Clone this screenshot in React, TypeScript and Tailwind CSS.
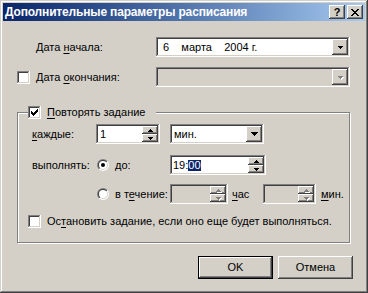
import React from "react";

const RAISED = "shadow-[inset_-1px_-1px_#404040,inset_1px_1px_#fff,inset_-2px_-2px_#808080]";
const SUNKEN = "shadow-[inset_-1px_-1px_#fff,inset_1px_1px_#808080,inset_-2px_-2px_#d4d0c8,inset_2px_2px_#404040]";

function Check() {
  const cols = [2, 3, 4, 3, 2, 1, 0];
  return (
    <svg width="7" height="7" viewBox="0 0 7 7" shapeRendering="crispEdges">
      {cols.map((y, x) => (
        <rect key={x} x={x} y={y} width="1" height="3" fill="#000" />
      ))}
    </svg>
  );
}

function Checkbox({ checked }: { checked?: boolean }) {
  return (
    <div className={`w-[13px] h-[13px] bg-white shrink-0 flex items-center justify-center ${SUNKEN}`}>
      {checked && <Check />}
    </div>
  );
}

function Radio({ checked, id }: { checked?: boolean; id: string }) {
  return (
    <svg width="12" height="12" viewBox="0 0 12 12" className="shrink-0">
      <defs>
        <linearGradient id={`o${id}`} x1="0" y1="0" x2="1" y2="1">
          <stop offset="0.5" stopColor="#808080" />
          <stop offset="0.5" stopColor="#ffffff" />
        </linearGradient>
        <linearGradient id={`i${id}`} x1="0" y1="0" x2="1" y2="1">
          <stop offset="0.5" stopColor="#404040" />
          <stop offset="0.5" stopColor="#d4d0c8" />
        </linearGradient>
      </defs>
      <circle cx="6" cy="6" r="6" fill={`url(#o${id})`} />
      <circle cx="6" cy="6" r="5" fill={`url(#i${id})`} />
      <circle cx="6" cy="6" r="4" fill="#fff" />
      {checked && <circle cx="6" cy="6" r="2" fill="#000" />}
    </svg>
  );
}

function Tri({ w, h, up, color }: { w: number; h: number; up?: boolean; color: string }) {
  const pts = up ? `0,${h} ${w},${h} ${w / 2},0` : `0,0 ${w},0 ${w / 2},${h}`;
  return (
    <svg width={w} height={h} viewBox={`0 0 ${w} ${h}`} shapeRendering="crispEdges">
      <polygon points={pts} fill={color} />
    </svg>
  );
}

function Arrow({ up, disabled, w = 5, h = 3 }: { up?: boolean; disabled?: boolean; w?: number; h?: number }) {
  if (disabled) {
    return (
      <div className="relative">
        <div className="absolute left-[1px] top-[1px]">
          <Tri w={w} h={h} up={up} color="#fff" />
        </div>
        <div className="relative">
          <Tri w={w} h={h} up={up} color="#808080" />
        </div>
      </div>
    );
  }
  return <Tri w={w} h={h} up={up} color="#000" />;
}

function Spin({ disabled }: { disabled?: boolean }) {
  return (
    <div className="flex flex-col w-[16px] my-[2px] mr-[2px] shrink-0">
      <div className={`flex-1 bg-[#d4d0c8] flex items-center justify-center ${RAISED}`}>
        <Arrow up disabled={disabled} />
      </div>
      <div className={`flex-1 bg-[#d4d0c8] flex items-center justify-center ${RAISED}`}>
        <Arrow disabled={disabled} />
      </div>
    </div>
  );
}

function DropBtn({ disabled, small }: { disabled?: boolean; small?: boolean }) {
  return (
    <div className={`w-[16px] my-[2px] mr-[2px] shrink-0 bg-[#d4d0c8] flex items-center justify-center ${RAISED}`}>
      <Arrow disabled={disabled} w={small ? 5 : 7} h={small ? 3 : 4} />
    </div>
  );
}

function U({ children }: { children: React.ReactNode }) {
  return <span className="underline underline-offset-[2px] decoration-1">{children}</span>;
}

export default function App() {
  return (
    <div className="w-[368px] h-[293px] bg-[#d4d0c8] p-[3px] flex flex-col font-['Liberation_Sans',Arial,sans-serif] text-[11px] text-black leading-none shadow-[inset_-1px_-1px_#404040,inset_1px_1px_#d4d0c8,inset_-2px_-2px_#808080,inset_2px_2px_#fff]">
      {/* title bar */}
      <div className="h-[18px] flex items-center pl-[2px] pr-[2px] bg-linear-to-r from-[#0a246a] to-[#a6caf0]">
        <span className="flex-1 text-white font-bold text-[12px] tracking-[-0.17px] whitespace-nowrap">Дополнительные параметры расписания</span>
        <div className={`w-[16px] h-[14px] bg-[#d4d0c8] flex items-center justify-center font-bold text-[11px] ${RAISED}`}>?</div>
        <div className={`w-[16px] h-[14px] ml-[2px] bg-[#d4d0c8] flex items-center justify-center ${RAISED}`}>
          <svg width="8" height="7" viewBox="0 0 8 7" shapeRendering="crispEdges">
            {[0, 1, 2, 3, 4, 5, 6].map((r) => {
              const a = r <= 3 ? r : 6 - r;
              return (
                <g key={r}>
                  <rect x={a} y={r} width="2" height="1" fill="#000" />
                  <rect x={6 - a} y={r} width="2" height="1" fill="#000" />
                </g>
              );
            })}
          </svg>
        </div>
      </div>

      {/* row 1 */}
      <div className="mt-[16px] h-[20px] flex items-center pl-[33px]">
        <span className="w-[120px]">Дата <U>н</U>ачала:</span>
        <div className={`w-[194px] h-[20px] bg-white flex ${SUNKEN}`}>
          <span className="flex-1 self-center pl-[7px] whitespace-pre">6    марта    2004 г.</span>
          <DropBtn small />
        </div>
      </div>

      {/* row 2 */}
      <div className="mt-[10px] h-[20px] flex items-center pl-[14px]">
        <Checkbox />
        <span className="ml-[6px] w-[120px]">Дата <U>о</U>кончания:</span>
        <div className={`w-[194px] h-[20px] bg-[#d4d0c8] flex ${SUNKEN}`}>
          <span className="flex-1" />
          <DropBtn small disabled />
        </div>
      </div>

      {/* group */}
      <div className="mt-[25px] ml-[14px] w-[333px] h-[131px] relative border border-[#808080] shadow-[inset_1px_1px_#fff,1px_1px_#fff] flex flex-col">
        <div className="absolute left-[10px] top-[-7px] w-[128px] h-[13px] bg-[#d4d0c8] flex items-center">
          <Checkbox checked />
          <span className="ml-[6px]"><U>П</U>овторять задание</span>
        </div>

        <div className="mt-[11px] h-[20px] flex items-center pl-[14px]">
          <span className="w-[64px]"><U>к</U>аждые:</span>
          <div className={`w-[64px] h-[20px] bg-white flex ${SUNKEN}`}>
            <span className="flex-1 self-center pl-[4px]">1</span>
            <Spin />
          </div>
          <div className={`ml-[10px] w-[94px] h-[20px] bg-white flex ${SUNKEN}`}>
            <span className="flex-1 self-center pl-[4px]">мин.</span>
            <DropBtn />
          </div>
        </div>

        <div className="mt-[11px] h-[20px] flex items-center pl-[14px]">
          <span className="w-[65px]">выполнять:</span>
          <Radio checked id="a" />
          <span className="ml-[6px] w-[55px]"><U>д</U>о:</span>
          <div className={`w-[96px] h-[20px] bg-white flex ${SUNKEN}`}>
            <span className="flex-1 self-center pl-[3px] flex items-center">
              19:<span className="bg-[#0a246a] text-white">00</span>
            </span>
            <Spin />
          </div>
        </div>

        <div className="mt-[9px] h-[20px] flex items-center pl-[14px]">
          <span className="w-[65px]" />
          <Radio id="b" />
          <span className="ml-[6px] w-[55px]">в т<U>е</U>чение:</span>
          <div className={`w-[58px] h-[20px] bg-[#d4d0c8] flex ${SUNKEN}`}>
            <span className="flex-1" />
            <Spin disabled />
          </div>
          <span className="ml-[4px] w-[31px]"><U>ч</U>ас</span>
          <div className={`w-[53px] h-[20px] bg-[#d4d0c8] flex ${SUNKEN}`}>
            <span className="flex-1" />
            <Spin disabled />
          </div>
          <span className="ml-[5px]"><U>м</U>ин.</span>
        </div>

        <div className="mt-[11px] h-[13px] flex items-center pl-[10px]">
          <Checkbox />
          <span className="ml-[6px]">Ос<U>т</U>ановить задание, если оно еще будет выполняться.</span>
        </div>
      </div>

      {/* buttons */}
      <div className="mt-[13px] flex justify-end pr-[12px]">
        <div className="w-[75px] h-[23px] border border-black">
          <div className={`w-full h-full flex items-center justify-center ${RAISED}`}>OK</div>
        </div>
        <div className={`ml-[5px] w-[75px] h-[23px] flex items-center justify-center ${RAISED}`}>Отмена</div>
      </div>
    </div>
  );
}
